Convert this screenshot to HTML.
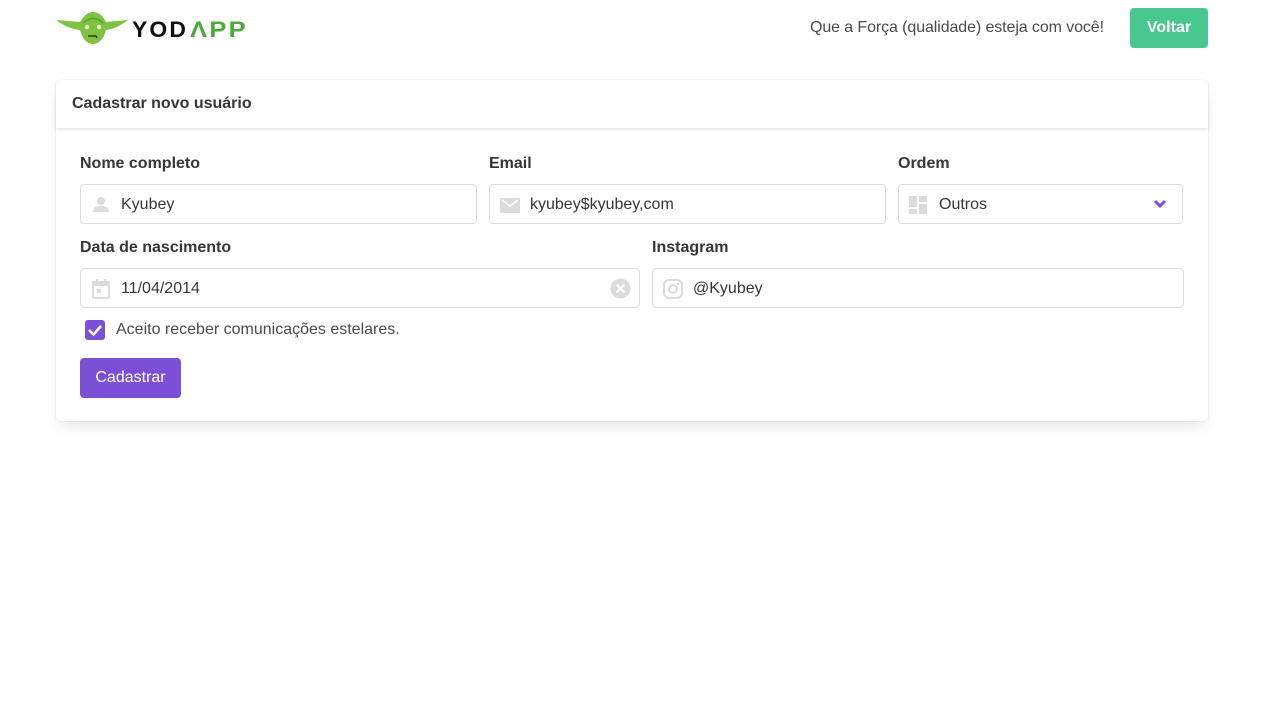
<!DOCTYPE html>
<html><head><meta charset="utf-8"><style>
*{box-sizing:border-box;margin:0;padding:0}
body{width:1280px;height:720px;background:#fff;font-family:"Liberation Sans",sans-serif;color:#363636;position:relative;overflow:hidden}
.abs{position:absolute}
.card{left:56px;top:80px;width:1152px;height:341px;border-radius:5px;box-shadow:0 8px 16px -4px rgba(10,10,10,.12),0 0 0 1px rgba(10,10,10,.03)}
.chead{left:0;top:0;width:1152px;height:48px;box-shadow:0 2px 3px rgba(10,10,10,.1);font-weight:bold;font-size:16px;padding:15px 16px;color:#363636}
.lbl{font-weight:bold;font-size:16px;color:#363636}
.inp{border:1px solid #dbdbdb;border-radius:4px;height:40px;background:#fff}
.inp .t{position:absolute;left:40px;top:11px;color:#363636;font-family:"Liberation Sans",sans-serif;font-size:16px}
.inp svg.ic{position:absolute;left:10px;top:10px}
</style></head><body>
<svg class="abs" style="left:56px;top:11px" width="194" height="34" viewBox="0 0 194 34">
<path d="M0 9 L24 11 Q30 1 37 1 Q45 1 50 11 L72 9 Q60 18 50 19 Q46 33 37 33 Q28 33 24 19 Q12 18 0 9Z" fill="#7dc242"/>
<path d="M27 12 Q37 3 47 12" stroke="#5a9e2c" stroke-width="1.5" fill="none"/>
<circle cx="31" cy="16" r="2.2" fill="#e8f4c8"/><circle cx="43" cy="16" r="2.2" fill="#e8f4c8"/>
<path d="M32 25 L40 25 L41 27" stroke="#222" stroke-width="1.3" fill="none"/>
<text x="76" y="26" font-family="Liberation Sans,sans-serif" font-size="22" font-weight="bold" letter-spacing="2" fill="#111" textLength="56" lengthAdjust="spacingAndGlyphs">YOD</text>
<text x="134" y="26" font-family="Liberation Sans,sans-serif" font-size="22" font-weight="bold" letter-spacing="2" fill="#4aaa3c" textLength="58" lengthAdjust="spacingAndGlyphs">ΛPP</text>
</svg>
<div class="abs" style="left:810px;top:19px;font-size:16px;color:#4a4a4a;letter-spacing:-0.1px">Que a Força (qualidade) esteja com você!</div>
<div class="abs" style="left:1130px;top:8px;width:78px;height:40px;background:#48c78e;border-radius:4px;color:#fff;font-weight:bold;font-size:16px;text-align:center;line-height:40px">Voltar</div>

<div class="abs card">
<div class="abs chead">Cadastrar novo usuário</div>
</div>

<div class="abs lbl" style="left:80px;top:155px">Nome completo</div>
<div class="abs lbl" style="left:489px;top:155px">Email</div>
<div class="abs lbl" style="left:898px;top:155px">Ordem</div>

<div class="abs inp" style="left:80px;top:184px;width:397px">
<svg class="ic" width="20" height="20" viewBox="0 0 20 20"><circle cx="10" cy="6" r="4" fill="#dbdbdb"/><path d="M2 17 Q2 11 10 11 Q18 11 18 17Z" fill="#dbdbdb"/></svg>
<span class="t">Kyubey</span></div>
<div class="abs inp" style="left:489px;top:184px;width:397px">
<svg class="ic" width="20" height="20" viewBox="0 0 20 20"><rect x="0" y="3" width="20" height="15" rx="1" fill="#dbdbdb"/><path d="M2 5 L10 11 L18 5" stroke="#fff" stroke-width="1.6" fill="none"/></svg>
<span class="t">kyubey$kyubey,com</span></div>
<div class="abs inp" style="left:898px;top:184px;width:285px">
<svg class="ic" width="20" height="20" viewBox="0 0 20 20"><rect x="0" y="1" width="8" height="11" fill="#dbdbdb"/><rect x="10" y="1" width="8" height="6" fill="#dbdbdb"/><rect x="0" y="14" width="8" height="5" fill="#dbdbdb"/><rect x="10" y="9" width="8" height="10" fill="#dbdbdb"/></svg>
<span class="t">Outros</span>
<svg class="abs" style="left:254px;top:14px" width="14" height="10" viewBox="0 0 14 10"><path d="M2 2 L7 7 L12 2" stroke="#7b4fd6" stroke-width="3" fill="none"/></svg></div>

<div class="abs lbl" style="left:80px;top:239px">Data de nascimento</div>
<div class="abs lbl" style="left:652px;top:239px">Instagram</div>

<div class="abs inp" style="left:80px;top:268px;width:560px">
<svg class="ic" width="20" height="20" viewBox="0 0 20 20"><rect x="2" y="3" width="16" height="16" rx="1" fill="none" stroke="#dbdbdb" stroke-width="2"/><rect x="2" y="3" width="16" height="4" fill="#dbdbdb"/><rect x="5" y="0" width="2" height="4" fill="#dbdbdb"/><rect x="13" y="0" width="2" height="4" fill="#dbdbdb"/><rect x="6" y="10" width="4" height="4" fill="#dbdbdb"/></svg>
<span class="t">11/04/2014</span>
<svg class="abs" style="left:529px;top:9px" width="21" height="21" viewBox="0 0 21 21"><circle cx="10.5" cy="10.5" r="10" fill="#dbdbdb"/><path d="M6.5 6.5 L14.5 14.5 M14.5 6.5 L6.5 14.5" stroke="#fff" stroke-width="2.2"/></svg></div>
<div class="abs inp" style="left:652px;top:268px;width:532px">
<svg class="ic" width="20" height="20" viewBox="0 0 20 20"><rect x="1" y="1" width="18" height="18" rx="5" fill="none" stroke="#dbdbdb" stroke-width="2"/><circle cx="10" cy="10" r="4" fill="none" stroke="#dbdbdb" stroke-width="2"/><circle cx="15" cy="5" r="1.2" fill="#dbdbdb"/></svg>
<span class="t">@Kyubey</span></div>

<div class="abs" style="left:85px;top:320px;width:20px;height:20px;background:#7b4fd6;border-radius:3px">
<svg width="20" height="20" viewBox="0 0 20 20"><path d="M4 10 L8.5 14.5 L16 6" stroke="#fff" stroke-width="2.6" fill="none"/></svg></div>
<div class="abs" style="left:116px;top:321px;font-size:16px;color:#4a4a4a">Aceito receber comunicações estelares.</div>

<div class="abs" style="left:80px;top:358px;width:101px;height:40px;background:#7b4fd6;border-radius:4px;color:#fff;font-size:16px;text-align:center;line-height:40px;font-family:'Liberation Sans',sans-serif">Cadastrar</div>
</body></html>
